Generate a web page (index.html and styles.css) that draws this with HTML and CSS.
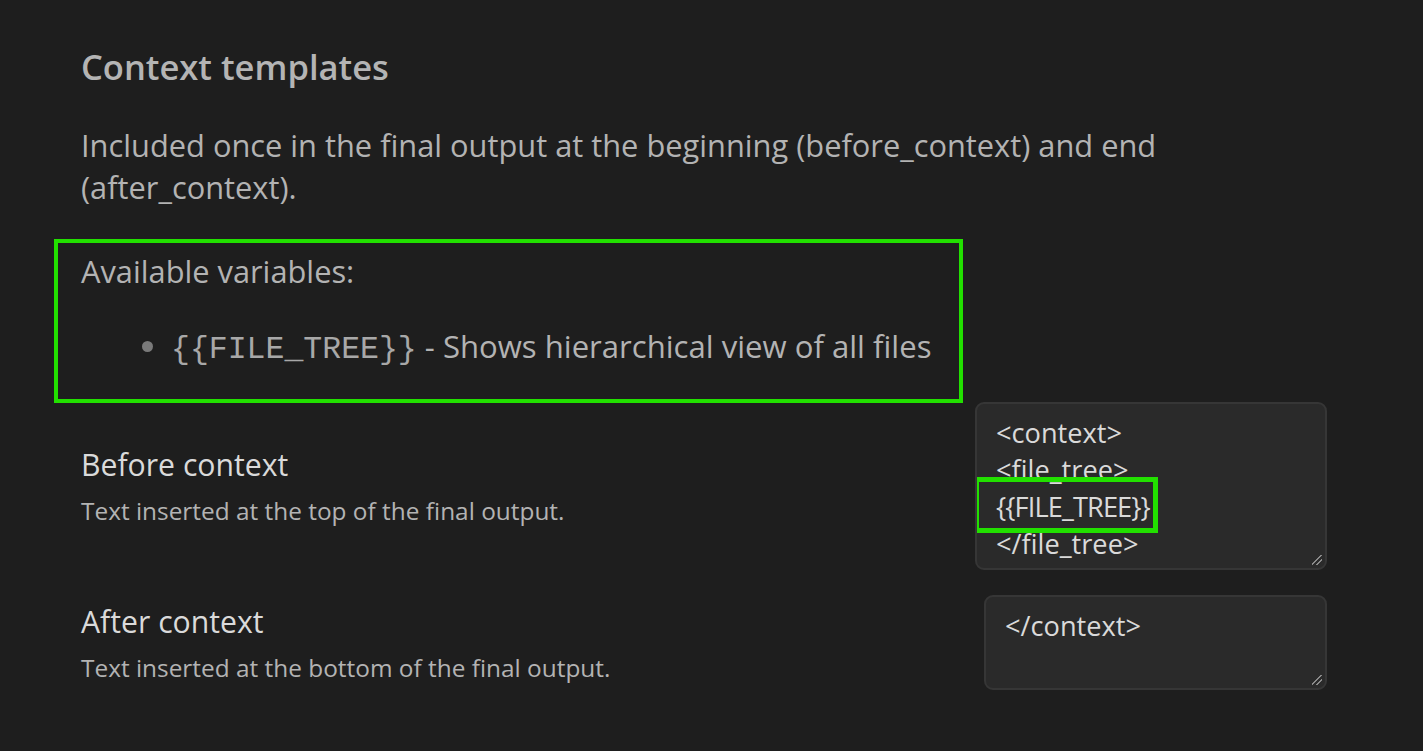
FILE: index.html
```html
<!DOCTYPE html>
<html>
<head>
<meta charset="utf-8">
<link rel="stylesheet" href="styles.css">
</head>
<body>
<div class="page">
  <h2 class="heading">Context templates</h2>
  <p class="intro">Included once in the final output at the beginning (before_context) and end (after_context).</p>
  <div class="vars-box">
    <p class="vars-title">Available variables:</p>
    <ul class="vars-list">
      <li><code>{{FILE_TREE}}</code> - Shows hierarchical view of all files</li>
    </ul>
  </div>
  <div class="setting setting-first">
    <div class="info">
      <div class="name">Before context</div>
      <div class="desc">Text inserted at the top of the final output.</div>
    </div>
    <div class="textarea ta-before">
      <div class="line">&lt;context&gt;</div>
      <div class="line">&lt;file_tree&gt;</div>
      <div class="line"><span class="mark">{{FILE_TREE}}</span></div>
      <div class="line">&lt;/file_tree&gt;</div>
      <span class="grip"></span>
    </div>
  </div>
  <div class="setting">
    <div class="info">
      <div class="name">After context</div>
      <div class="desc">Text inserted at the bottom of the final output.</div>
    </div>
    <div class="textarea ta-after">
      <div class="line">&lt;/context&gt;</div>
      <span class="grip"></span>
    </div>
  </div>
</div>
</body>
</html>
```
FILE: styles.css
```css
html, body {
  margin: 0;
  padding: 0;
  background: #1e1e1e;
}
body {
  font-family: "Open Sans", "Noto Sans", sans-serif;
  color: #b3b3b3;
  width: 1423px;
  height: 751px;
  overflow: hidden;
}
.page {
  padding: 45px 96px 0 81px;
  display: flex;
  flex-direction: column;
}
.heading {
  margin: 0;
  font-size: 34.5px;
  font-weight: 600;
  line-height: 44px;
  color: #b4b4b4;
}
.intro {
  margin: 35px 0 0;
  font-size: 30.8px;
  line-height: 42px;
  color: #b3b3b3;
  max-width: 1100px;
}
.vars-box {
  margin: 31px 0 0 -27px;
  width: 909px;
  box-sizing: border-box;
  border: 4px solid #22e000;
  padding: 7px 0 28px 23px;
}
.vars-title {
  margin: 0;
  font-size: 30.8px;
  line-height: 42px;
}
.vars-list {
  margin: 33px 0 0;
  padding-left: 90px;
  font-size: 31.1px;
  line-height: 42px;
}
.vars-list li::marker {
  color: #7a7a7a;
}
.vars-list code {
  font-family: "Liberation Mono", "Courier New", monospace;
  font-size: 31.5px;
  color: #a8a8a8;
}
.setting {
  display: flex;
  align-items: center;
  justify-content: space-between;
  margin-top: 25px;
}
.setting-first {
  margin-top: -1px;
}
.name {
  font-size: 30.2px;
  line-height: 40px;
  color: #dadada;
}
.desc {
  margin-top: 10px;
  font-size: 24.4px;
  line-height: 32px;
  color: #b3b3b3;
}
.textarea {
  position: relative;
  box-sizing: border-box;
  background: #2a2a2a;
  border: 2px solid #363636;
  border-radius: 9px;
  padding: 9.5px 19px;
  font-size: 27.2px;
  line-height: 37px;
  color: #dadada;
  overflow: hidden;
}
.ta-before {
  width: 352px;
  height: 168px;
}
.ta-after {
  width: 343px;
  height: 95px;
}
.line {
  white-space: pre;
}
.mark {
  position: relative;
  letter-spacing: -0.9px;
}
.mark::before {
  content: "";
  position: absolute;
  top: -11px;
  bottom: -8px;
  left: -22px;
  right: -8px;
  border: 5px solid #22e000;
}
.grip {
  position: absolute;
  right: 3px;
  bottom: 3px;
  width: 10px;
  height: 10px;
  background: linear-gradient(135deg, transparent 45%, #8a8a8a 45%, #8a8a8a 55%, transparent 55%, transparent 70%, #8a8a8a 70%, #8a8a8a 80%, transparent 80%);
}
```
